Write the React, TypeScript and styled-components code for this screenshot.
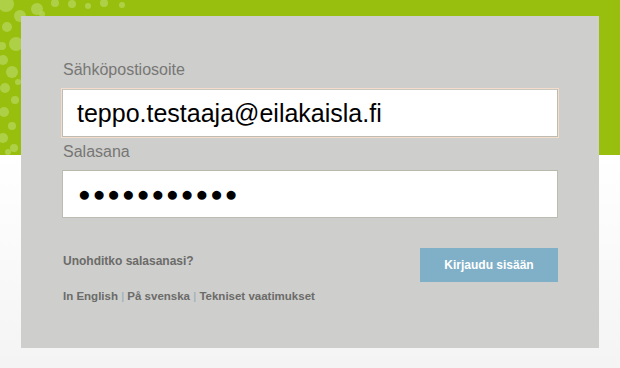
import React, { FC } from "react";
import styled, { createGlobalStyle } from "styled-components";

const GlobalStyle = createGlobalStyle`
  html, body {
    margin: 0;
    padding: 0;
    background: #f5f5f5;
    font-family: "Liberation Sans", Arial, sans-serif;
  }
`;

const SPage = styled.div`
  position: relative;
  width: 620px;
  height: 368px;
  box-sizing: border-box;
  padding: 16px 21px 20px;
  overflow: hidden;
  background: linear-gradient(
    to bottom,
    #98bf0d 0px,
    #98bf0d 155px,
    #ffffff 155px,
    #f4f4f4 368px
  );
`;

const SDots = styled.svg`
  position: absolute;
  left: 0;
  top: 0;
`;

const SPanel = styled.form`
  position: relative;
  height: 100%;
  box-sizing: border-box;
  padding: 44px 41px 0;
  background: #cececc;
  display: flex;
  flex-direction: column;
`;

const SLabel = styled.label`
  display: block;
  font-size: 16px;
  line-height: 20px;
  color: #777775;
  margin-left: 1px;
`;

interface FieldStyleProps {
  focused?: boolean;
}

const SInput = styled.input<FieldStyleProps>`
  display: block;
  width: 100%;
  height: 48px;
  box-sizing: border-box;
  margin: ${({ focused }) => (focused ? "9px 0 5px" : "8px 0 0")};
  padding: 0 14px;
  border: 1px solid #bcbcb2;
  border-top-color: ${({ focused }) => (focused ? "#c8c8c0" : "#b8b8ac")};
  box-shadow: ${({ focused }) => (focused ? "0 0 0 1px #f6dccb" : "none")};
  outline: none;
  background: #fff;
  color: #000;
  font-family: "Liberation Sans", Arial, sans-serif;
  font-size: 25px;
`;

const SDotsInput = styled(SInput)`
  font-size: 21px;
  letter-spacing: 2px;
  padding-left: 15px;
`;

const SBottom = styled.div`
  display: flex;
  justify-content: space-between;
  align-items: flex-start;
  margin-top: 30px;
`;

const SLinks = styled.div`
  display: flex;
  flex-direction: column;
  padding-top: 6px;
  padding-left: 1px;
`;

const SLink = styled.a`
  font-size: 12px;
  font-weight: bold;
  line-height: 14px;
  color: #6b6b69;
  text-decoration: none;
`;

const SLangRow = styled.div`
  margin-top: 21px;
  font-size: 11.5px;
  font-weight: bold;
  line-height: 14px;
  color: #6b6b69;
  white-space: pre;
`;

const SSep = styled.span`
  color: #8fa9b8;
  font-weight: normal;
`;

const SButton = styled.button`
  width: 138px;
  height: 34px;
  border: none;
  background: #80b0c8;
  color: #fff;
  font-family: "Liberation Sans", Arial, sans-serif;
  font-size: 12px;
  font-weight: bold;
  padding: 0;
`;

const DOTS: [number, number, number][] = [
  [6, 4, 8], [37, 9, 6], [55, 3, 4], [20, 16, 6], [7, 27, 5],
  [16, 44, 7], [3, 60, 5], [12, 72, 6], [5, 88, 5], [15, 100, 4],
  [4, 112, 5], [12, 126, 4], [3, 138, 5], [14, 148, 4], [72, 4, 4],
  [88, 6, 3], [104, 3, 4], [42, 14, 3], [2, 46, 4], [18, 82, 3],
  [8, 152, 3], [122, 5, 3],
];

const Dots: FC = () => (
  <SDots width="140" height="160" viewBox="0 0 140 160">
    {DOTS.map(([x, y, r], i) => (
      <circle key={i} cx={x} cy={y} r={r} fill="#b3d455" opacity={0.8} />
    ))}
  </SDots>
);

const App: FC = () => {
  return (
    <>
      <GlobalStyle />
      <SPage>
        <Dots />
        <SPanel onSubmit={(e) => e.preventDefault()}>
          <SLabel htmlFor="email">Sähköpostiosoite</SLabel>
          <SInput
            id="email"
            focused
            readOnly
            defaultValue="teppo.testaaja@eilakaisla.fi"
          />
          <SLabel htmlFor="password">Salasana</SLabel>
          <SDotsInput id="password" readOnly defaultValue={"●".repeat(11)} />
          <SBottom>
            <SLinks>
              <SLink href="#">Unohditko salasanasi?</SLink>
              <SLangRow>
                In English <SSep>|</SSep> På svenska <SSep>|</SSep> Tekniset
                vaatimukset
              </SLangRow>
            </SLinks>
            <SButton type="submit">Kirjaudu sisään</SButton>
          </SBottom>
        </SPanel>
      </SPage>
    </>
  );
};

export default App;
